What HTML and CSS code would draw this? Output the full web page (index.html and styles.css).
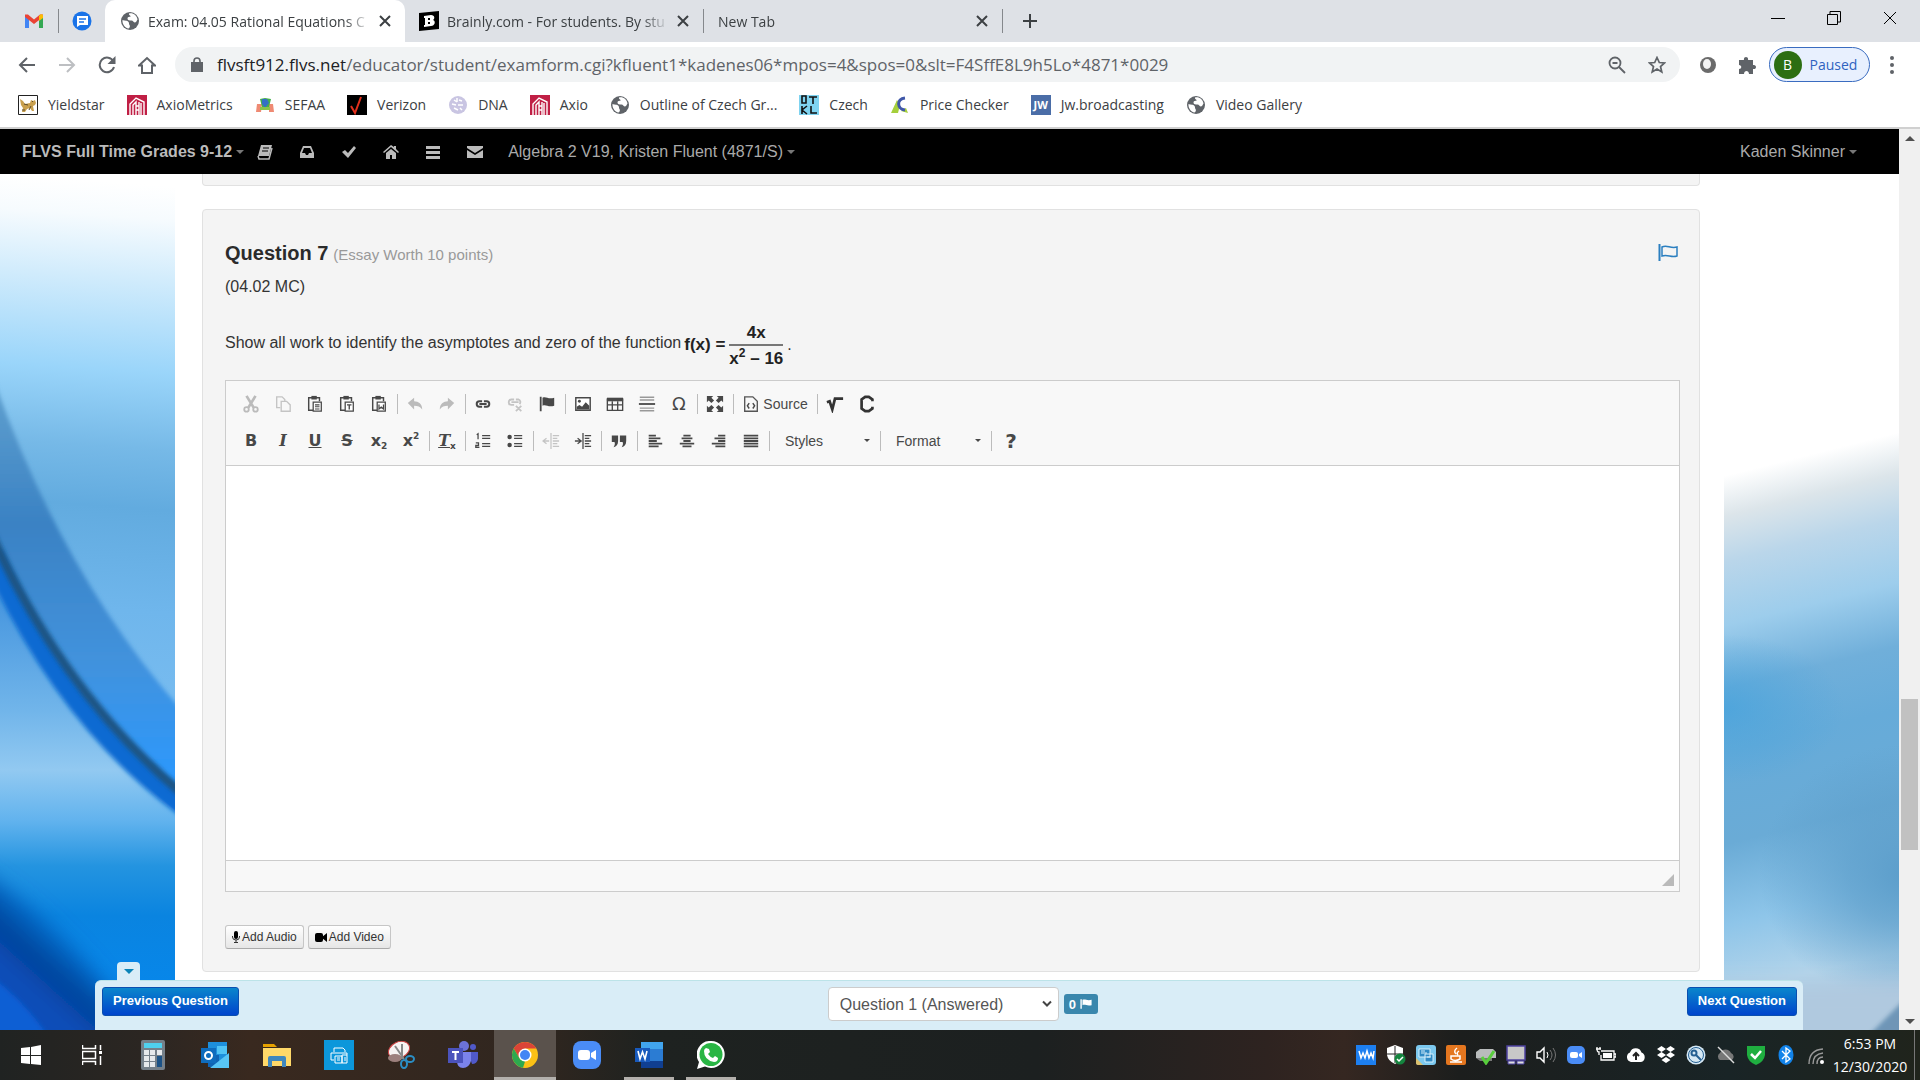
FILE: index.html
```html
<!DOCTYPE html>
<html lang="en">
<head>
<meta charset="utf-8">
<title>Exam: 04.05 Rational Equations</title>
<link rel="stylesheet" href="styles.css">
</head>
<body>
<svg class="defs" width="0" height="0" aria-hidden="true">
  <symbol id="globe" viewBox="0 0 20 20"><circle cx="10" cy="10" r="9" fill="#5f6368"/><path d="M2.500 9c2 1 5 0 6 2 1 1 0 2 1 3s0 3-1 3.500C5 17 2 13 2.500 9zM9 2.500c4-1 8 2 8.500 6-1 1-1 3-3 3-2-1-1-2-3-2s-4 0-4-2 2-1 3-2-2-1-1.500-3z" fill="#fff"/></symbol>
  <symbol id="close" viewBox="0 0 12 12"><path d="M1 1l10 10M11 1L1 11" stroke="#3c4043" stroke-width="2"/></symbol>
  <symbol id="axio" viewBox="0 0 20 20"><path fill="#c01f45" d="M0 0h20v20H0z"/><path d="M3 20V9l6-6 8 4v13M6 20V10l3-3v13M12 20V7M14 8v12M9 11h3M9 15h3" stroke="#fff" stroke-width="1.4" fill="none"/></symbol>
  <symbol id="lines" viewBox="0 0 20 20"><path d="M3 4h14v3H3zM3 9h14v3H3zM3 14h14v3H3z"/></symbol>
  <symbol id="flag" viewBox="0 0 20 20"><path d="M2 2h2v16H2zM5 3c4-2 6 2 13 0v9c-7 2-9-2-13 0z"/></symbol>
  <symbol id="paste" viewBox="0 0 20 20"><path d="M8 17H3V3h12v4" fill="none" stroke="#484848" stroke-width="1.6"/><path fill="#484848" d="M6 1h6v4H6z"/><path d="M8 8h9v10H8z" fill="#fff" stroke="#484848" stroke-width="1.4"/></symbol>
</svg>

<header class="browser">
  <div class="tabs">
    <button class="pin" aria-label="Gmail"><svg width="20" height="16" viewBox="0 0 20 16"><path fill="#4285f4" d="M1 3l4 3v9H1z"/><path fill="#34a853" d="M15 6l4-3v12h-4z"/><path fill="#ea4335" d="M1 1.500h3l6 5 6-5h3V4l-9 7-9-7z"/><path fill="#fbbc04" d="M15 3l2-2 2 1v3l-4 3z"/></svg></button>
    <button class="pin pin-last" aria-label="Messages"><svg width="20" height="20" viewBox="0 0 20 20"><circle cx="10" cy="10" r="9.500" fill="#1a73e8"/><path fill="#fff" d="M5 5h11v9H8l-3 2z"/><path d="M7 8h7M7 11h5" stroke="#1a73e8" stroke-width="1.300"/></svg></button>
    <div class="tab active"><svg class="i20"><use href="#globe"/></svg><span class="tab-name">Exam: 04.05 Rational Equations C</span><button aria-label="Close tab"><svg class="i12"><use href="#close"/></svg></button></div>
    <div class="tab divided"><svg class="i20" viewBox="0 0 20 20"><path d="M0 2l20-2v18L0 20z"/><path fill="#fff" fill-rule="evenodd" d="M5 5l7-1c4 0 4 4 2 5 3 1 2 6-2 6l-7 1v-2h1V7H5zm4 2v2h2V7zm0 4v2h2v-2z"/></svg><span class="tab-name">Brainly.com - For students. By stu</span><button aria-label="Close tab"><svg class="i12"><use href="#close"/></svg></button></div>
    <div class="tab divided last"><span class="tab-name">New Tab</span><button aria-label="Close tab"><svg class="i12"><use href="#close"/></svg></button></div>
    <button class="new-tab" aria-label="New tab"><svg width="16" height="16"><path d="M8 1v14M1 8h14" stroke="#3c4043" stroke-width="2"/></svg></button>
    <div class="window">
      <button aria-label="Minimize"><svg width="14" height="14"><path d="M0 7.500h14" stroke="#000"/></svg></button>
      <button aria-label="Restore"><svg width="14" height="14"><path d="M.5 3.500h10v10H.5zM3 3V.5h10.500V11H11" fill="none" stroke="#000"/></svg></button>
      <button aria-label="Close"><svg width="14" height="14"><path d="M1 1l12 12M13 1L1 13" stroke="#000"/></svg></button>
    </div>
  </div>

  <div class="address">
    <button class="nav-btn" aria-label="Back"><svg width="18" height="16"><path d="M17 8H2M9 1L2 8l7 7" fill="none" stroke="#5f6368" stroke-width="2"/></svg></button>
    <button class="nav-btn" aria-label="Forward"><svg width="18" height="16"><path d="M1 8h15M9 1l7 7-7 7" fill="none" stroke="#bdbfc2" stroke-width="2"/></svg></button>
    <button class="nav-btn" aria-label="Reload"><svg width="18" height="18"><path d="M15.500 5.500A7.300 7.300 0 1 0 16 11" fill="none" stroke="#5f6368" stroke-width="2"/><path d="M17.500 0v8h-8z" fill="#5f6368"/></svg></button>
    <button class="nav-btn" aria-label="Home"><svg width="18" height="18"><path d="M1 9.500L9 2l8 7.500h-3V17H4V9.500z" fill="none" stroke="#5f6368" stroke-width="2"/></svg></button>
    <div class="omnibox">
      <svg width="12" height="16"><path fill="#5f6368" d="M0 5h12v10H0z"/><path d="M3 6V4a3 3 0 0 1 6 0v2" fill="none" stroke="#5f6368" stroke-width="1.600"/></svg>
      <div class="url" role="textbox" contenteditable="true" spellcheck="false" aria-label="Address"><b>flvsft912.flvs.net</b>/educator/student/examform.cgi?kfluent1*kadenes06*mpos=4&amp;spos=0&amp;slt=F4SffE8L9h5Lo*4871*0029</div>
      <button aria-label="Zoom"><svg width="18" height="18"><circle cx="7" cy="7" r="5.500" fill="none" stroke="#5f6368" stroke-width="1.800"/><path d="M4.500 7h5M11 11l6 6" stroke="#5f6368" stroke-width="1.800"/></svg></button>
      <button aria-label="Bookmark"><svg width="18" height="18" viewBox="0 0 18 18"><path d="M9 1.500l2.300 5 5.200.5-4 3.500 1.300 5.500L9 13l-4.800 3 1.300-5.500-4-3.500 5.200-.5z" fill="none" stroke="#5f6368" stroke-width="1.700"/></svg></button>
    </div>
    <button class="ext" aria-label="Extension"><svg width="18" height="18"><circle cx="9" cy="9" r="8" fill="#6b6b6b"/><ellipse cx="8" cy="8" rx="4" ry="5" fill="#f3f3f3"/></svg></button>
    <button class="ext" aria-label="Extensions"><svg width="18" height="18"><path fill="#5f6368" d="M1 4h5c-1-4 5-4 4 0h5v5c4-1 4 5 0 4v5h-4c0-4-5-4-5 0H1v-5c3 0 3-4 0-4z"/></svg></button>
    <button class="profile"><span class="avatar">B</span>Paused</button>
    <button class="more" aria-label="Menu"><svg width="4" height="18"><circle cx="2" cy="2" r="2" fill="#5f6368"/><circle cx="2" cy="9" r="2" fill="#5f6368"/><circle cx="2" cy="16" r="2" fill="#5f6368"/></svg></button>
  </div>

  <nav class="bookmarks">
    <a href="#"><svg class="i20" viewBox="0 0 20 20"><path fill="#fff" stroke="#222" d="M.5.5h19v19H.5z"/><path fill="#c9a04e" d="M2 4l3 2 2 3 5-1 1-3 2 1 2-1 1 3-1 2-2 1 1 5h-2l-2-3-3 1-2 3H4l1-4-2-3z"/><path d="M6 9l4 1M13 11l-2 4M4 15h3M14 6l1 1" stroke="#5b4a2a"/></svg>Yieldstar</a>
    <a href="#"><svg class="i20"><use href="#axio"/></svg>AxioMetrics</a>
    <a href="#"><svg class="i20" viewBox="0 0 20 20"><path fill="#ef8a73" d="M2 9h5l-1 8H1zM14 9h4l1 8h-5z"/><path fill="#45b04a" d="M5 4l5-1 6 1-2 8H7z"/><path fill="#356fc4" d="M7 4h5l2 4-4 5-3-4z"/><path fill="#8bc34a" d="M5 12h10v3H5z"/></svg>SEFAA</a>
    <a href="#"><svg class="i20" viewBox="0 0 20 20"><path d="M0 0h20v20H0z"/><path d="M4 11l4 7 6-16" fill="none" stroke="#e3311d" stroke-width="2"/></svg>Verizon</a>
    <a href="#"><svg class="i20" viewBox="0 0 20 20"><circle cx="10" cy="10" r="9" fill="#c9c5e2"/><path d="M6 5l3 2M11 5l3 1M4 9l4 1M10 10h5M6 13l4 2M12 13l2 2M9 3v4" stroke="#fff" stroke-width="1.500"/></svg>DNA</a>
    <a href="#"><svg class="i20"><use href="#axio"/></svg>Axio</a>
    <a href="#"><svg class="i20"><use href="#globe"/></svg>Outline of Czech Gr...</a>
    <a href="#"><svg class="i20" viewBox="0 0 20 20"><path fill="#7fd3f0" d="M0 0h20v20H0z"/><path d="M3 1v7h4V1zM10 2h8M14 2v7M3 11v8M8 11l-5 4 5 4M12 11v7h6" stroke="#111" stroke-width="1.600" fill="none"/></svg>Czech</a>
    <a href="#"><svg class="i20" viewBox="0 0 20 20"><path fill="#a5cf3b" d="M1 18l6-13 3 5-2 8zM11 16l5-3 2 5z"/><path d="M15 3c-9 1-8 11 0 12" fill="none" stroke="#3f57a8" stroke-width="3"/></svg>Price Checker</a>
    <a href="#"><span class="jw">JW</span>Jw.broadcasting</a>
    <a href="#"><svg class="i20"><use href="#globe"/></svg>Video Gallery</a>
  </nav>
</header>

<div class="view">
  <div class="site">
    <nav class="topbar">
      <a class="brand" href="#">FLVS Full Time Grades 9-12<i class="caret"></i></a>
      <a class="top-icon" href="#" aria-label="Gradebook"><svg class="i16" viewBox="0 0 16 16"><path d="M4 1h11l-3 11H1z"/><path d="M1 12l1 3h10l3-11" fill="none" stroke="#bbb" stroke-width="1.500"/><path d="M6 4h6M5 7h6" stroke="#000"/></svg></a>
      <a class="top-icon" href="#" aria-label="Inbox"><svg class="i16" viewBox="0 0 16 16"><path fill-rule="evenodd" d="M4 2h8l3 7v5H1V9zm1 2L3 9h3l1 2h2l1-2h3l-2-5z"/></svg></a>
      <a class="top-icon" href="#" aria-label="Tasks"><svg class="i16" viewBox="0 0 16 16"><path d="M1 8l3-2 3 3 6-7 2 2-8 10z"/></svg></a>
      <a class="top-icon" href="#" aria-label="Home"><svg class="i16" viewBox="0 0 16 16"><path d="M8 1l3 2V2h2v3l3 3-1 1-7-6-7 6-1-1zM3 9l5-4 5 4v6H9v-4H7v4H3z"/></svg></a>
      <a class="top-icon" href="#" aria-label="List"><svg class="i20"><use href="#lines"/></svg></a>
      <a class="top-icon" href="#" aria-label="Mail"><svg class="i16" viewBox="0 0 16 16"><path d="M0 2h16v2L8 9 0 4zM0 6l8 5 8-5v8H0z"/></svg></a>
      <a class="course" href="#">Algebra 2 V19, Kristen Fluent (4871/S)<i class="caret"></i></a>
      <a class="user" href="#">Kaden Skinner<i class="caret"></i></a>
    </nav>

    <div class="backdrop">
      <svg class="art-left" viewBox="0 0 175 856" preserveAspectRatio="none" aria-hidden="true">
        <defs>
          <linearGradient id="sky" gradientUnits="userSpaceOnUse" x1="0" y1="0" x2="-60" y2="850"><stop offset="0" stop-color="#fff"/><stop offset=".04" stop-color="#f6fbfe"/><stop offset=".11" stop-color="#d2ecfc"/><stop offset=".22" stop-color="#9ad5fa"/><stop offset=".31" stop-color="#76b9e7"/><stop offset=".38" stop-color="#62abdf"/><stop offset=".5" stop-color="#6fb6ec"/><stop offset=".62" stop-color="#78bcf0"/></linearGradient>
          <linearGradient id="band" gradientUnits="userSpaceOnUse" x1="0" y1="215" x2="0" y2="600"><stop offset="0" stop-color="#5f9fce"/><stop offset=".35" stop-color="#3a82c4"/><stop offset=".7" stop-color="#4292dc"/><stop offset="1" stop-color="#2d98fb"/></linearGradient>
          <linearGradient id="sea" gradientUnits="userSpaceOnUse" x1="0" y1="400" x2="0" y2="856"><stop offset="0" stop-color="#3d8fdc"/><stop offset=".3" stop-color="#71b5ea"/><stop offset=".43" stop-color="#92c9f1"/><stop offset=".54" stop-color="#62b3ee"/><stop offset=".64" stop-color="#2494e0"/><stop offset=".75" stop-color="#0a84e0"/><stop offset="1" stop-color="#0588f0"/></linearGradient>
          <linearGradient id="deep" gradientUnits="userSpaceOnUse" x1="95" y1="720" x2="23" y2="800"><stop offset="0" stop-color="#0574dc" stop-opacity="0"/><stop offset=".45" stop-color="#0564c4" stop-opacity=".7"/><stop offset=".85" stop-color="#033f94"/><stop offset="1" stop-color="#0a4db8"/></linearGradient>
          <filter id="soft" x="-20%" y="-20%" width="140%" height="140%"><feGaussianBlur stdDeviation="2"/></filter>
          <filter id="softer" x="-50%" y="-50%" width="200%" height="200%"><feGaussianBlur stdDeviation="10"/></filter>
        </defs>
        <path fill="url(#sky)" d="M0 0h175v856H0z"/>
        <path fill="url(#band)" filter="url(#soft)" d="M-10 195Q60 400 185 540v110Q60 560-10 400z"/>
        <path fill="url(#sea)" d="M0 408Q70 550 175 636v220H0z"/>
        <path d="M-8 380Q65 545 185 632" fill="none" stroke="#0a6ad2" stroke-width="22" filter="url(#soft)"/>
        <path d="M-8 362Q65 522 185 622" fill="none" stroke="#1d5484" stroke-width="9" filter="url(#soft)"/>
        <path d="M-60 675Q60 730 170 900H-60z" fill="url(#deep)" filter="url(#softer)"/>
        <path d="M-30 790Q20 815 60 880H-30z" fill="#0a5ed4" filter="url(#soft)"/>
      </svg>
      <svg class="art-right" viewBox="0 0 175 856" preserveAspectRatio="none" aria-hidden="true">
        <defs>
          <linearGradient id="dusk" gradientUnits="userSpaceOnUse" x1="0" y1="280" x2="0" y2="856"><stop offset="0" stop-color="#fff"/><stop offset=".07" stop-color="#dce5ea"/><stop offset=".15" stop-color="#bad6ea"/><stop offset=".26" stop-color="#9dcdec"/><stop offset=".37" stop-color="#70afda"/><stop offset=".48" stop-color="#66abd9"/><stop offset=".64" stop-color="#6aabd6"/><stop offset=".78" stop-color="#8ec5e9"/><stop offset=".9" stop-color="#b3d4ea"/><stop offset="1" stop-color="#a9c5de"/></linearGradient>
          <radialGradient id="pool"><stop offset="0" stop-color="#48a3dc" stop-opacity=".8"/><stop offset="1" stop-color="#48a3dc" stop-opacity="0"/></radialGradient>
          <radialGradient id="shade"><stop offset="0" stop-color="#5b9dca"/><stop offset=".4" stop-color="#5b9dca" stop-opacity=".7"/><stop offset="1" stop-color="#5b9dca" stop-opacity="0"/></radialGradient>
        </defs>
        <path fill="#fff" d="M0 0h175v856H0z"/>
        <path fill="url(#dusk)" d="M-20 0h215v916H-20z" transform="translate(0 22) skewY(-14)"/>
        <ellipse cx="0" cy="535" rx="120" ry="75" fill="url(#pool)"/>
        <ellipse cx="185" cy="700" rx="150" ry="130" fill="url(#shade)"/>
        <path fill="#b0c9df" d="M-60 810h300v120H-60z" filter="url(#softer)"/>
        <path fill="#5f89ad" d="M140 866l45-45v45z" filter="url(#soft)" opacity=".8"/>
      </svg>

      <main class="paper">
        <div class="well well-prev"></div>
        <section class="well question">
          <div class="q-head"><h1>Question 7</h1><span class="worth">(Essay Worth 10 points)</span>
            <button class="q-flag" aria-label="Flag question"><svg width="20" height="18"><path d="M1.500 0v17" stroke="#2b7fc0" stroke-width="2"/><path d="M4 3c5-3 8 2 15 0v9c-6 2-9-2-15 0z" fill="none" stroke="#2b7fc0" stroke-width="1.500"/></svg></button></div>
          <p class="code">(04.02 MC)</p>
          <div class="prompt"><label for="answer">Show all work to identify the asymptotes and zero of the function</label>
            <span class="math">f(x)&nbsp;=</span><span class="frac"><span>4x</span><span class="den">x<sup>2</sup> – 16</span></span><span class="dot">.</span></div>

          <div class="editor">
            <div class="toolbar">
              <div class="tools">
                <button class="off" aria-label="Cut"><svg class="i18" viewBox="0 0 20 20"><path d="M5 1l8 13M15 1L7 14" stroke="#bbb" stroke-width="3"/><circle cx="5" cy="16" r="2.500" fill="none" stroke="#bbb" stroke-width="2"/><circle cx="15" cy="16" r="2.500" fill="none" stroke="#bbb" stroke-width="2"/></svg></button>
                <button aria-label="Copy"><svg class="i18" viewBox="0 0 20 20"><path d="M7 14H3V2h6l3 3v2" fill="none" stroke="#c4c4c4" stroke-width="1.500"/><path d="M8 7h6l4 4v7H8z" fill="none" stroke="#c4c4c4" stroke-width="1.500"/></svg></button>
                <button aria-label="Paste"><svg class="i18" viewBox="0 0 20 20"><use href="#paste" width="20" height="20"/><path d="M10 11h5M10 13h5M10 15.500h5" stroke="#484848" stroke-width="1.200"/></svg></button>
                <button aria-label="Paste as text"><svg class="i18" viewBox="0 0 20 20"><use href="#paste" width="20" height="20"/><path d="M10 11h5M12.500 11v5" stroke="#484848" stroke-width="1.500"/></svg></button>
                <button aria-label="Paste from Word"><svg class="i18" viewBox="0 0 20 20"><use href="#paste" width="20" height="20"/><path d="M10 10.500v5l2.500-2 2.500 2v-5" fill="none" stroke="#484848" stroke-width="1.400"/></svg></button>
                <i class="sep"></i>
                <button aria-label="Undo"><svg class="i18" viewBox="0 0 20 20"><path fill="#bbb" d="M2 9l7-6v4c5 0 9 3 9 9-2-3-5-4-9-4v4z"/></svg></button>
                <button aria-label="Redo"><svg class="i18" viewBox="0 0 20 20"><path fill="#bbb" d="M18 9l-7-6v4c-5 0-9 3-9 9 2-3 5-4 9-4v4z"/></svg></button>
                <i class="sep"></i>
                <button aria-label="Link"><svg class="i18" viewBox="0 0 20 20"><path d="M9 13H6a3 3 0 0 1 0-6h3M11 7h3a3 3 0 0 1 0 6h-3M6 10h8" fill="none" stroke="#484848" stroke-width="2.200"/></svg></button>
                <button aria-label="Unlink"><svg class="i18" viewBox="0 0 20 20"><path d="M9 11H6a3 3 0 0 1 0-6h3M11 5h3a3 3 0 0 1 1 5M6 8h8M11 12l6 6M17 12l-6 6" fill="none" stroke="#c4c4c4" stroke-width="2"/></svg></button>
                <button aria-label="Anchor"><svg class="i18"><use href="#flag"/></svg></button>
                <i class="sep"></i>
                <button aria-label="Image"><svg class="i18" viewBox="0 0 20 20"><path d="M2 3h16v14H2z" fill="#fff" stroke="#484848" stroke-width="1.600"/><circle cx="6" cy="7" r="1.600"/><path d="M3 16v-3l3-2 3 2 4-5 4 4v4z"/></svg></button>
                <button aria-label="Table"><svg class="i18" viewBox="0 0 20 20"><path d="M1 3h18v4H1z"/><path d="M1.500 4v13h17V4M1 11h18M7 7v10M13 7v10" fill="none" stroke="#484848" stroke-width="1.500"/></svg></button>
                <button aria-label="Horizontal line"><svg class="i18" viewBox="0 0 20 20"><path d="M2 2.500h16M2 5.500h16M2 14.500h16M2 17.500h16" stroke="#999" stroke-width="1.500"/><path d="M1 9h18v2H1z"/></svg></button>
                <button class="glyph omega" aria-label="Special character">Ω</button>
                <i class="sep"></i>
                <button aria-label="Maximize"><svg class="i18" viewBox="0 0 20 20"><path d="M1 1h7L6 3l3 3-3 3-3-3-2 2zM19 1v7l-2-2-3 3-3-3 3-3-2-2zM1 19v-7l2 2 3-3 3 3-3 3 2 2zM19 19h-7l2-2-3-3 3-3 3 3 2-2z"/></svg></button>
                <i class="sep"></i>
                <button class="source"><svg class="i18" viewBox="0 0 20 20"><path d="M3 2h9l5 5v11H3z" fill="none" stroke="#555" stroke-width="1.500"/><path d="M8 9l-2 3 2 3M12 9l2 3-2 3" fill="none" stroke="#484848" stroke-width="1.600"/></svg>Source</button>
                <i class="sep"></i>
                <button aria-label="Math"><svg class="i18" viewBox="0 0 20 20"><path d="M1 8l3-1 3 9 3-12h9" fill="none" stroke="#333" stroke-width="3"/></svg></button>
                <button aria-label="Chemistry"><svg class="i18" viewBox="0 0 20 20"><path d="M16 7V5l-4-3H8L4 5v10l4 3h4l4-3v-2" fill="none" stroke="#333" stroke-width="3"/></svg></button>
              </div>
              <div class="tools">
                <button class="glyph" aria-label="Bold">B</button>
                <button class="glyph italic" aria-label="Italic">I</button>
                <button class="glyph under" aria-label="Underline">U</button>
                <button class="glyph strike" aria-label="Strikethrough">S</button>
                <button class="glyph" aria-label="Subscript">x<sub>2</sub></button>
                <button class="glyph" aria-label="Superscript">x<sup>2</sup></button>
                <i class="sep"></i>
                <button class="glyph" aria-label="Remove format"><span class="italic under">T</span><sub>x</sub></button>
                <i class="sep"></i>
                <button aria-label="Numbered list"><svg class="i18" viewBox="0 0 20 20"><path d="M3 3l1.500-1v6M2 12h3v3H2v2h4M9 4h9M9 7h9M9 13h9M9 16h9" fill="none" stroke="#484848" stroke-width="1.400"/></svg></button>
                <button aria-label="Bulleted list"><svg class="i18" viewBox="0 0 20 20"><circle cx="4" cy="5.500" r="2.500"/><circle cx="4" cy="14.500" r="2.500"/><path d="M9 4h9M9 7h9M9 13h9M9 16h9" stroke="#484848" stroke-width="1.400"/></svg></button>
                <i class="sep"></i>
                <button aria-label="Outdent"><svg class="i18" viewBox="0 0 20 20"><path d="M10 1v18M12 4h7M12 7h5M12 10h7M12 13h5M12 16h7M5 7l-4 3 4 3M1 10h7" fill="none" stroke="#c4c4c4" stroke-width="1.400"/></svg></button>
                <button aria-label="Indent"><svg class="i18" viewBox="0 0 20 20"><path d="M10 1v18M12 4h7M12 7h5M12 10h7M12 13h5M12 16h7M4 7l4 3-4 3M1 10h7" fill="none" stroke="#484848" stroke-width="1.400"/></svg></button>
                <i class="sep"></i>
                <button aria-label="Quote"><svg class="i18" viewBox="0 0 20 20"><path d="M3 4h6v6c0 4-2 6-5 7 1-2 2-4 1-6H2V4zM12 4h6v6c0 4-2 6-5 7 1-2 2-4 1-6h-3V4z"/></svg></button>
                <i class="sep"></i>
                <button aria-label="Align left"><svg class="i18" viewBox="0 0 20 20"><path d="M3 4h8M3 7h13M3 10h9M3 13h15M3 16h11" stroke="#484848" stroke-width="2"/></svg></button>
                <button aria-label="Center"><svg class="i18" viewBox="0 0 20 20"><path d="M6 4h8M4 7h12M6 10h8M2 13h16M5 16h10" stroke="#484848" stroke-width="2"/></svg></button>
                <button aria-label="Align right"><svg class="i18" viewBox="0 0 20 20"><path d="M9 4h8M5 7h12M9 10h8M2 13h15M6 16h11" stroke="#484848" stroke-width="2"/></svg></button>
                <button aria-label="Justify"><svg class="i18" viewBox="0 0 20 20"><path d="M2 4h16M2 7h16M2 10h16M2 13h16M2 16h16" stroke="#484848" stroke-width="2"/></svg></button>
                <i class="sep"></i>
                <button class="combo">Styles<i class="caret"></i></button>
                <i class="sep"></i>
                <button class="combo">Format<i class="caret"></i></button>
                <i class="sep"></i>
                <button class="glyph help" aria-label="Help">?</button>
              </div>
            </div>
            <textarea id="answer" class="answer"></textarea>
            <div class="status"><svg width="12" height="12"><path fill="#bababa" d="M12 0v12H0z"/></svg></div>
          </div>

          <div class="media">
            <button><svg width="8" height="12"><rect x="2" width="4" height="8" rx="2"/><path d="M.5 5v1q0 3 3.500 3t3.500-3V5M4 9v3M2 11.500h4" fill="none" stroke="#333"/></svg>Add Audio</button>
            <button><svg width="12" height="11"><rect y="1" width="8" height="9" rx="2"/><path d="M7 5l5-4v9L7 6z"/></svg>Add Video</button>
          </div>
        </section>
      </main>

      <footer class="pager">
        <button class="fold" aria-label="Collapse"><i class="caret"></i></button>
        <button class="primary">Previous Question</button>
        <div class="jump">
          <span class="pick"><select aria-label="Question"><option>Question 1 (Answered)</option></select><svg width="10" height="8"><path d="M1 1.500l4 4 4-4" fill="none" stroke="#444" stroke-width="2"/></svg></span>
          <span class="count">0 <svg width="14" height="12" viewBox="0 0 20 20" preserveAspectRatio="none"><use href="#flag" width="20" height="20"/></svg></span>
        </div>
        <button class="primary">Next Question</button>
      </footer>
    </div>
  </div>
  <div class="scroll"><i class="up"></i><i class="thumb"></i><i class="down"></i></div>
</div>

<div class="taskbar">
  <button class="slot start" aria-label="Start"><svg width="20" height="20"><path fill="#fff" d="M0 3l9-1v8H0zM10 2l10-2v10H10zM0 11h9v8l-9-1zM10 11h10v9l-10-1z"/></svg></button>
  <button class="slot start" aria-label="Task view"><svg width="20" height="20"><path d="M.5 0v3.500h13V0M.5 6.500h13v7H.5zM.5 20v-3.500h13V20M18.500 0v5M18.500 11v9" fill="none" stroke="#fff" stroke-width="1.500"/><path fill="#fff" d="M17 6h3v3h-3z"/></svg></button>
  <button class="slot" aria-label="Calculator"><svg width="24" height="30"><rect width="24" height="30" rx="2" fill="#75808a"/><path fill="#4fd0ee" d="M3 3h18v5H3z"/><path fill="#e6e9ec" d="M3 10h5v5H3zM9 10h5v5H9zM16 10h5v5h-5zM3 16h5v5H3zM9 16h5v5H9zM3 22h5v5H3zM9 22h5v5H9z"/><path fill="#1c5286" d="M16 16h5v11h-5z"/></svg></button>
  <button class="slot" aria-label="Outlook"><svg width="30" height="28"><path fill="#1d8fdc" d="M8 1h19v25H8z"/><path fill="#50c3f5" d="M17 5h10v8H17z"/><path fill="#0f64b4" d="M8 14h11v12H8z"/><path fill="#58c5f5" d="M29 12v15H10z"/><path fill="#0f6cbd" d="M1 7h15v15H1z"/><circle cx="8.500" cy="14.500" r="3.500" fill="none" stroke="#fff" stroke-width="2"/></svg></button>
  <button class="slot" aria-label="File Explorer"><svg width="28" height="24"><path fill="#e6a100" d="M0 1h11l3 3H0z"/><path fill="#ffd969" d="M0 5h28v18H0z"/><path fill="#3f87bd" d="M5 24v-9q0-2 2-2h14q2 0 2 2v9h-4v-6H9v6z"/></svg></button>
  <button class="slot" aria-label="Printer"><svg width="30" height="30"><path fill="#0c97db" d="M0 0h30v30H0z"/><path d="M10 12V8h9l2 2v2M10 20H7v-7h16v2M11 16h7v7h-7zM18 15h5v8h-5zM13 18h3M13 20h3M20 18h2M20 20h2" fill="none" stroke="#fff"/></svg></button>
  <button class="slot" aria-label="Snipping Tool"><svg width="28" height="28"><ellipse cx="12" cy="9" rx="11" ry="8" fill="#f6f3f2" stroke="#c44" transform="rotate(-25 12 9)"/><ellipse cx="8" cy="17" rx="7" ry="4" fill="#9c807d"/><path d="M8 5l9 13M15 3v15" stroke="#888" stroke-width="2"/><ellipse cx="23" cy="18" rx="4" ry="3" fill="none" stroke="#2b8ec4" stroke-width="2"/><ellipse cx="17" cy="23" rx="3" ry="4" fill="none" stroke="#2b8ec4" stroke-width="2"/></svg></button>
  <button class="slot" aria-label="Teams"><svg width="30" height="28"><circle cx="16" cy="5" r="5" fill="#6c72d8"/><circle cx="25" cy="6" r="3" fill="#5059c9"/><path fill="#5059c9" d="M20 11h10v7q-1 5-6 5z"/><path fill="#7b83eb" d="M9 11h14v9q-2 7-8 7t-6-7z"/><path fill="#4b53bc" d="M0 7h15v15H0z"/><path d="M4 11h7M7.500 11v8" stroke="#fff" stroke-width="2"/></svg></button>
  <button class="slot open active" aria-label="Chrome"><svg width="28" height="28" viewBox="0 0 28 28"><circle cx="14" cy="14" r="13" fill="#fbc116"/><path fill="#db4437" d="M2.700 7.500A13 13 0 0 1 25.300 7.500H14L8.400 17.200z"/><path fill="#2da94f" d="M2.700 7.500L8.400 17.200l5.600 3.300L12 26.800A13 13 0 0 1 2.700 7.500z"/><circle cx="14" cy="14" r="6.500" fill="#fff"/><circle cx="14" cy="14" r="5" fill="#4285f4"/></svg></button>
  <button class="slot" aria-label="Zoom"><svg width="28" height="28"><rect width="28" height="28" rx="8" fill="#4a8cf6"/><rect x="5" y="9" width="12" height="10" rx="3" fill="#fff"/><path fill="#fff" d="M18 12l5-3v10l-5-3z"/></svg></button>
  <button class="slot open" aria-label="Word"><svg width="28" height="26"><path fill="#2b7cd3" d="M6 0h22v26H6z"/><path fill="#41a5ee" d="M6 0h22v7H6z"/><path fill="#103f91" d="M6 19h22v7H6z"/><path fill="#185abd" d="M0 6h15v14H0z"/><path d="M3 9l2 8 2.500-7L10 17l2-8" fill="none" stroke="#fff" stroke-width="1.600"/></svg></button>
  <button class="slot open" aria-label="WhatsApp"><svg width="28" height="28"><path fill="#fff" d="M14 0a13.500 13.500 0 1 1-6 25.500L0 28l2-7A13.500 13.500 0 0 1 14 0z"/><circle cx="14" cy="13.500" r="11.500" fill="#29b544"/><path fill="#fff" d="M9 7l3 1 1 3-2 2q2 3 5 4l2-2 3 2q0 4-4 4Q7 19 7 10q0-2 2-3z"/></svg></button>

  <div class="tray">
    <svg class="i20" viewBox="0 0 20 20"><path fill="#1d7ff0" d="M0 0h20v20H0z"/><path d="M3 6l2 7 2-5 2 5 2-7 2 7 2-5 2 5 1-7" fill="none" stroke="#fff" stroke-width="1.500"/></svg>
    <svg class="i20" viewBox="0 0 20 20"><path fill="#fff" d="M1 3l8-3 8 3v7q-1 6-8 9-7-3-8-9z"/><path d="M9 1v17M1 9h16" stroke="#222"/><circle cx="14" cy="14" r="5.500" fill="#14853e"/><path d="M11 14l2 2 4-4" fill="none" stroke="#fff" stroke-width="1.500"/></svg>
    <svg class="i20" viewBox="0 0 20 20"><rect width="20" height="20" rx="3" fill="#7cc8ee"/><path d="M3 4h11v8H3zM9 9h8v8H9z" fill="#2f8ac4" stroke="#d6effb"/><path d="M5 6h4M5 8h6M11 12h4" stroke="#d6effb"/><path d="M0 13l7 7H2q-2 0-2-2z" fill="#dcc06c"/></svg>
    <svg class="i20" viewBox="0 0 20 20"><rect width="20" height="20" rx="2" fill="#e4761f"/><path d="M11 3q-4 3-1 6M13 6q-3 2-1 4M5 11h9v3q-5 3-9 0zM4 17h12" fill="none" stroke="#fff" stroke-width="1.500"/></svg>
    <svg class="i20" viewBox="0 0 20 20"><path fill="#b9bcbc" d="M0 7l4-3h13l3 3v6H0z"/><path fill="#777" d="M0 13h16v3H4z"/><path d="M6 12l4 6 8-12" fill="none" stroke="#58ce3c" stroke-width="3"/></svg>
    <svg class="i20" viewBox="0 0 20 20"><path fill="#c8c8c8" stroke="#4d42a0" stroke-width="1.500" d="M1 1h18v14H1z"/><path fill="#ddd" stroke="#4d42a0" d="M2 16h7v3H2zM11 16h7v3h-7z"/></svg>
    <svg class="i20" viewBox="0 0 20 20"><path d="M1 7h3l4-4v14l-4-4H1z" fill="none" stroke="#fff" stroke-width="1.400"/><path d="M11 7q2 3 0 6" fill="none" stroke="#fff"/><path d="M14 5q4 5 0 10M17 3q5 7 0 14" fill="none" stroke="#777"/></svg>
    <svg class="i20" viewBox="0 0 20 20"><rect x="1" y="1" width="18" height="18" rx="5" fill="#4a8cf6"/><rect x="4" y="7" width="8" height="6" rx="2" fill="#fff"/><path fill="#fff" d="M13 9l3-2v6l-3-2z"/></svg>
    <svg class="i20" viewBox="0 0 20 20"><path d="M5 6h13v9H5v-5M18 9h2v3h-2M0 4h5M1 2v2M4 2v2M1 4q0 3 2 3v3" fill="none" stroke="#fff" stroke-width="1.300"/><path fill="#fff" d="M7 8h9v5H7z"/></svg>
    <svg class="i20" viewBox="0 0 20 20"><path fill="#fff" d="M5 17a5 5 0 0 1-1-9.500 6 6 0 0 1 11.500 0A5 5 0 0 1 15 17z"/><path d="M10 15V8M7 11l3-3 3 3" fill="none" stroke="#222" stroke-width="2"/></svg>
    <svg class="i20" viewBox="0 0 20 20"><path fill="#fff" d="M1 4l4.500-3L10 4 5.500 7zM10 4l4.500-3L19 4l-4.500 3zM1 10l4.500-3L10 10l-4.500 3zM10 10l4.500-3 4.500 3-4.500 3zM5.500 15l4.500-3 4.500 3-4.500 3z"/></svg>
    <svg class="i20" viewBox="0 0 20 20"><circle cx="10" cy="10" r="9.500" fill="#d5e8f4"/><circle cx="10" cy="10" r="7.500" fill="none" stroke="#245f92"/><circle cx="8" cy="8" r="2.500" fill="none" stroke="#245f92" stroke-width="2"/><path d="M10 10l5 5" stroke="#245f92" stroke-width="2"/></svg>
    <svg class="i20" viewBox="0 0 20 20"><path fill="#777" d="M4 15a4 4 0 0 1 0-7 6 6 0 0 1 11 0 4 4 0 0 1 1 7z"/><path d="M2 2l16 16" stroke="#ddd" stroke-width="1.500"/></svg>
    <svg class="i20" viewBox="0 0 20 20"><path fill="#1fae40" d="M1 1h18v9q-1 7-9 10-8-3-9-10z"/><path d="M5 9l4 4 6-7" fill="none" stroke="#fff" stroke-width="2.500"/></svg>
    <svg class="i20" viewBox="0 0 20 20"><ellipse cx="10" cy="10" rx="7.500" ry="10" fill="#1283ea"/><path d="M6 6l8 8-4 3V3l4 3-8 8" fill="none" stroke="#fff" stroke-width="1.300"/></svg>
    <svg class="i20" viewBox="0 0 20 20"><path d="M3 19Q3 5 17 4M7 19Q7 9 17 8M11 19q0-7 6-7" fill="none" stroke="#999" stroke-width="1.400"/><circle cx="16" cy="17" r="2" fill="#fff"/></svg>
  </div>
  <div class="clock"><span>6:53 PM</span><span>12/30/2020</span></div>
</div>
</body>
</html>
```

FILE: styles.css
```css
* { box-sizing: border-box; }

body {
  margin: 0;
  min-height: 100vh;
  display: flex;
  flex-direction: column;
  font-family: "Liberation Sans", Arial, sans-serif;
  font-size: 16px;
  color: #333;
  background: #fff;
}

button {
  margin: 0;
  padding: 0;
  border: 0;
  background: none;
  font: inherit;
  color: inherit;
  display: flex;
  align-items: center;
  justify-content: center;
}

a { color: inherit; text-decoration: none; }
svg { display: block; flex: none; }
.defs { position: absolute; }
.i12 { width: 12px; height: 12px; }
.i16 { width: 16px; height: 16px; }
.i18 { width: 18px; height: 18px; }
.i20 { width: 20px; height: 20px; }

.caret {
  display: inline-block;
  border: 4px solid transparent;
  border-top-color: currentColor;
  border-bottom: 0;
}

/* Browser chrome */
.browser {
  font-family: "Open Sans", "Noto Sans", sans-serif;
  font-size: 14px;
  color: #3c4043;
  border-bottom: 2px solid #d0d0d0;
}

.tabs {
  display: flex;
  align-items: center;
  height: 42px;
  padding: 0 2px 0 10px;
  background: #dee1e6;
}
.pin { width: 48px; height: 24px; }
.pin-last { width: 47px; border-left: 1px solid #85888c; }
.tab {
  display: flex;
  align-items: center;
  gap: 8px;
  width: 299px;
  height: 24px;
  padding: 0 14px;
}
.tab.active {
  width: 300px;
  height: 42px;
  padding: 0 14px 0 15px;
  background: #fff;
  border-radius: 10px 10px 0 0;
}
.tab.divided { border-right: 1px solid #85888c; }
.tab-name {
  flex: 1;
  white-space: nowrap;
  mask-image: linear-gradient(to right, #000 88%, transparent);
}
.new-tab { width: 54px; }
.window { margin-left: auto; align-self: flex-start; display: flex; }
.window button { width: 56px; height: 36px; }

.address {
  display: flex;
  align-items: center;
  height: 45px;
  padding: 0 26px 0 7px;
}
.nav-btn { width: 40px; height: 34px; }
.omnibox {
  flex: 1;
  display: flex;
  align-items: center;
  gap: 22px;
  height: 35px;
  margin: 0 8px;
  padding: 0 14px 0 16px;
  border-radius: 18px;
  background: #f1f3f4;
}
.url { flex: 1; margin-left: -8px; font-size: 17px; color: #5f6368; white-space: nowrap; outline: 0; }
.url b { font-weight: 400; color: #202124; }
.ext { width: 39px; }
.profile {
  gap: 8px;
  width: 101px;
  height: 35px;
  margin-left: 3px;
  padding-right: 8px;
  border: 1px solid #3a6cc0;
  border-radius: 18px;
  background: #e8f0fe;
  color: #2f62c0;
}
.avatar {
  width: 28px;
  height: 28px;
  line-height: 28px;
  border-radius: 50%;
  background: #2c6e12;
  color: #fff;
  text-align: center;
}
.more { margin-left: 20px; width: 4px; }

.bookmarks {
  display: flex;
  align-items: center;
  gap: 22px;
  height: 40px;
  padding: 0 18px 5px;
}
.bookmarks a { display: flex; align-items: center; gap: 10px; white-space: nowrap; }
.jw {
  width: 20px;
  height: 20px;
  line-height: 20px;
  background: #4a6da7;
  color: #fff;
  font-size: 11px;
  font-weight: 700;
  text-align: center;
}

/* Site */
.view { flex: 1; display: flex; }
.site { flex: 1; display: flex; flex-direction: column; }

.topbar {
  display: flex;
  align-items: center;
  height: 45px;
  padding: 0 42px 0 22px;
  background: #000;
  color: #aaa;
  fill: #bbb;
}
.brand { font-weight: 700; color: #bbb; }
.topbar .caret { margin: 0 0 3px 4px; color: #777; }
.top-icon { width: 42px; display: flex; justify-content: center; }
.course { margin-left: 12px; }
.user { margin-left: auto; }

.backdrop { position: relative; flex: 1; display: flex; flex-direction: column; }
.art-left, .art-right { position: absolute; top: 0; width: 175px; height: 100%; }
.art-left { left: 0; }
.art-right { right: 0; }

.paper {
  position: relative;
  flex: 1;
  display: flex;
  flex-direction: column;
  margin: 0 175px;
  padding: 0 24px 8px 27px;
  background: #fff;
}
.well { border: 1px solid #e1e1e1; border-radius: 4px; background: #f4f4f4; }
.well-prev { height: 12px; border-top: 0; border-radius: 0 0 4px 4px; }
.question {
  flex: 1;
  display: flex;
  flex-direction: column;
  margin-top: 23px;
  padding: 29px 19px 22px 22px;
}
.q-head { display: flex; align-items: center; gap: 5px; height: 28px; }
.q-head h1 { margin: 0; font-size: 20px; line-height: 28px; color: #2b2b2b; }
.worth { font-size: 15px; color: #999; padding-top: 3px; }
.q-flag { margin: 0 2px 0 auto; }
.code { margin: 9px 0 0; line-height: 22px; }
.prompt { display: flex; align-items: center; height: 60px; margin-top: 17px; }
.prompt label { margin-bottom: 4px; }
.math { margin: 0 4px 0 3px; font-size: 17px; font-weight: 700; color: #222; }
.frac {
  display: flex;
  flex-direction: column;
  margin-top: 4px;
  font-size: 17px;
  font-weight: 700;
  line-height: 22px;
  text-align: center;
  color: #222;
}
.den { border-top: 2px solid #777; line-height: 26px; }
.den sup { font-size: 12px; line-height: 0; }
.dot { margin-left: 4px; }

.editor { flex: 1; display: flex; flex-direction: column; margin-top: 5px; border: 1px solid #ccc; background: #fff; }
.toolbar { padding: 4px 9px 6px; background: #f8f8f8; border-bottom: 1px solid #ccc; fill: #484848; }
.tools { display: flex; align-items: center; height: 37px; color: #484848; font-size: 14px; }
.tools button { width: 32px; height: 28px; }
.sep { width: 1px; height: 20px; margin: 0 1px 0 2px; background: #bcbcbc; }
.tools .source { width: 80px; gap: 3px; }
.tools .combo { width: 107px; padding: 0 8px 0 14px; justify-content: space-between; }
.tools .combo .caret { border-width: 3px; border-bottom: 0; }
.tools .glyph { font-family: "DejaVu Sans", sans-serif; font-size: 16px; font-weight: 700; }
.tools .italic { font-family: "DejaVu Serif", serif; font-style: italic; }
.tools .under { text-decoration: underline; }
.tools .strike { text-decoration: line-through; }
.tools .omega { font-weight: 400; font-size: 18px; }
.glyph sub, .glyph sup { font-size: 9px; line-height: 0; }
.glyph sub { margin-top: 10px; }
.glyph sup { margin-bottom: 10px; }
.tools .help { font-size: 20px; width: 36px; }
.answer { flex: 1; width: 100%; border: 0; outline: 0; resize: none; display: block; }
.status {
  display: flex;
  align-items: center;
  justify-content: flex-end;
  height: 31px;
  padding: 8px 5px 0 0;
  border-top: 1px solid #ccc;
  background: #f8f8f8;
}

.media { display: flex; gap: 4px; margin-top: 33px; }
.media button {
  gap: 2px;
  height: 24px;
  padding: 0 6px;
  border: 1px solid #c6c6c6;
  border-bottom-color: #aaa;
  border-radius: 3px;
  background: linear-gradient(#fff, #e6e6e6);
  font-size: 12px;
}

.pager {
  position: relative;
  display: flex;
  justify-content: space-between;
  align-items: flex-start;
  height: 50px;
  margin: 0 96px 0 95px;
  padding: 6px 6px 0 7px;
  border-top: 1px solid #bce3e8;
  border-radius: 6px 6px 0 0;
  background: #d9edf7;
}
.fold {
  position: absolute;
  left: 22px;
  top: -19px;
  width: 23px;
  height: 19px;
  border-radius: 4px 4px 0 0;
  background: #d9edf7;
  color: #0a84b8;
}
.fold .caret { border-width: 5px; border-bottom: 0; }
.primary {
  height: 29px;
  padding: 0 10px 3px;
  border: 1px solid #0a4fb0;
  border-radius: 3px;
  background: linear-gradient(#0a86cc, #0044cc);
  color: #fff;
  font-size: 13px;
  font-weight: 700;
}
.jump { display: flex; align-items: center; gap: 5px; }
.pick { display: flex; align-items: center; position: relative; }
.pick select {
  appearance: none;
  width: 231px;
  height: 34px;
  padding: 0 11px;
  border: 1px solid #ccc;
  border-radius: 4px;
  background: #fff;
  font: inherit;
  color: #555;
}
.pick svg { position: absolute; right: 7px; pointer-events: none; }
.count {
  display: flex;
  align-items: center;
  gap: 3px;
  height: 20px;
  padding: 0 5px;
  border-radius: 3px;
  background: #3a87ad;
  color: #fff;
  fill: #fff;
  font-size: 13px;
  font-weight: 700;
}

.scroll {
  display: grid;
  grid-template-rows: 18px 552fr 151fr 162fr 18px;
  justify-items: center;
  width: 21px;
  background: #f0f0f0;
}
.up, .down { width: 0; height: 0; border: 5px solid transparent; align-self: center; }
.up { border-bottom-color: #505050; border-top: 0; }
.down { grid-row: 5; border-top-color: #505050; border-bottom: 0; }
.thumb { grid-row: 3; width: 17px; background: #c1c1c1; }

/* Taskbar */
.taskbar {
  display: flex;
  height: 50px;
  padding-right: 5px;
  background: linear-gradient(90deg, #202322 0, #2c2622 8%, #39291f 13%, #30261f 28%, #1e2220 34%, #1c2020 54%, #2e2320 66%, #352721 70%, #1c1e1d 76%, #192426 90%, #20241c 100%);
  font-family: "Open Sans", "Noto Sans", sans-serif;
  font-size: 14px;
  color: #fff;
}
.slot { width: 62px; height: 50px; }
.slot.start { width: 61px; }
.slot.open { border: solid transparent; border-width: 0 6px; box-shadow: inset 0 -3px #b3b0ac; }
.slot.active { border: 0; background: #5a524c; }
.tray { margin-left: auto; display: flex; align-items: center; gap: 10px; }
.clock {
  display: flex;
  flex-direction: column;
  align-items: center;
  justify-content: center;
  width: 89px;
  line-height: 23px;
  border-right: 1px solid #777;
}
```
